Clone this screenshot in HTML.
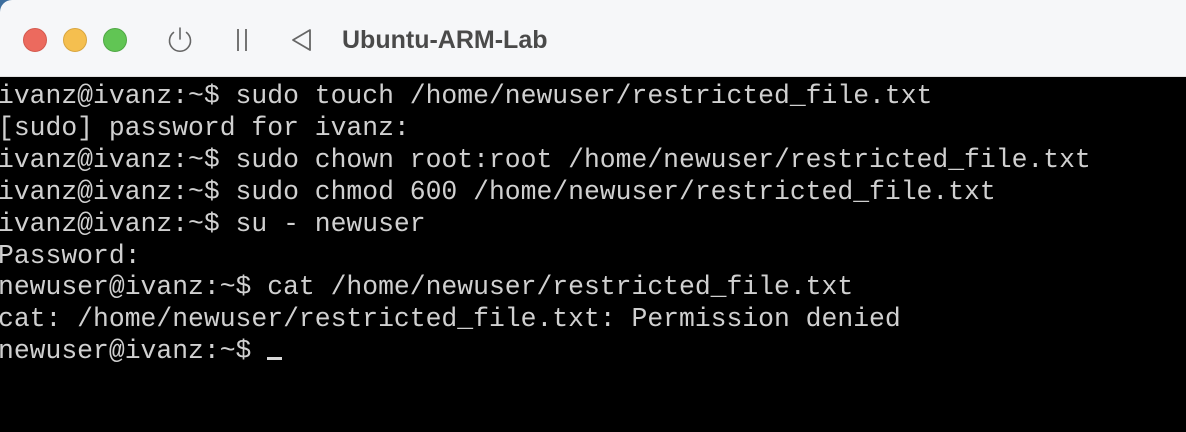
<!DOCTYPE html>
<html><head><style>
html,body{margin:0;padding:0;width:1186px;height:432px;overflow:hidden;background:#000}
.bar{position:absolute;left:0;top:0;width:1186px;height:76px;background:#f6f7f9;border-bottom:1px solid #e2e2e2;border-top-left-radius:12px}
.corner{position:absolute;left:0;top:0;width:14px;height:14px;background:#3d6e9e}
.dot{position:absolute;top:28px;width:22px;height:22px;border-radius:50%}
.title{position:absolute;left:342px;top:26px;font:bold 25px "Liberation Sans",sans-serif;color:#4a4a4a}
.term{position:absolute;left:-2px;top:81px;font-family:"Liberation Mono",monospace;font-size:26.4px;line-height:31.9px;color:#d0d0d0;white-space:pre;letter-spacing:0}
.cur{display:inline-block;width:15px;height:3px;background:#d8d8d8;vertical-align:-2px}
</style></head><body>
<div class="corner"></div>
<div class="bar">
<div class="dot" style="left:23px;background:#ec6a5e;border:0.5px solid #d45a4f"></div>
<div class="dot" style="left:63px;background:#f5bf4f;border:0.5px solid #d9a640"></div>
<div class="dot" style="left:103px;background:#61c554;border:0.5px solid #50a845"></div>
<svg style="position:absolute;left:164px;top:24px" width="32" height="32" viewBox="0 0 32 32" fill="none" stroke="#666" stroke-width="1.6" stroke-linecap="round"><path d="M16 4v11"/><path d="M9.5 8.5a10.5 10.5 0 1 0 13 0"/></svg>
<svg style="position:absolute;left:230px;top:26px" width="24" height="28" viewBox="0 0 24 28" stroke="#666" stroke-width="1.8"><path d="M8 3v22M16 3v22"/></svg>
<svg style="position:absolute;left:288px;top:26px" width="28" height="28" viewBox="0 0 28 28" fill="none" stroke="#666" stroke-width="1.8" stroke-linejoin="round"><path d="M22 4L5 14l17 10z"/></svg>
<div class="title">Ubuntu-ARM-Lab</div>
</div>
<div class="term">ivanz@ivanz:~$ sudo touch /home/newuser/restricted_file.txt
[sudo] password for ivanz:
ivanz@ivanz:~$ sudo chown root:root /home/newuser/restricted_file.txt
ivanz@ivanz:~$ sudo chmod 600 /home/newuser/restricted_file.txt
ivanz@ivanz:~$ su - newuser
Password:
newuser@ivanz:~$ cat /home/newuser/restricted_file.txt
cat: /home/newuser/restricted_file.txt: Permission denied
newuser@ivanz:~$ <span class="cur"></span></div>
</body></html>
